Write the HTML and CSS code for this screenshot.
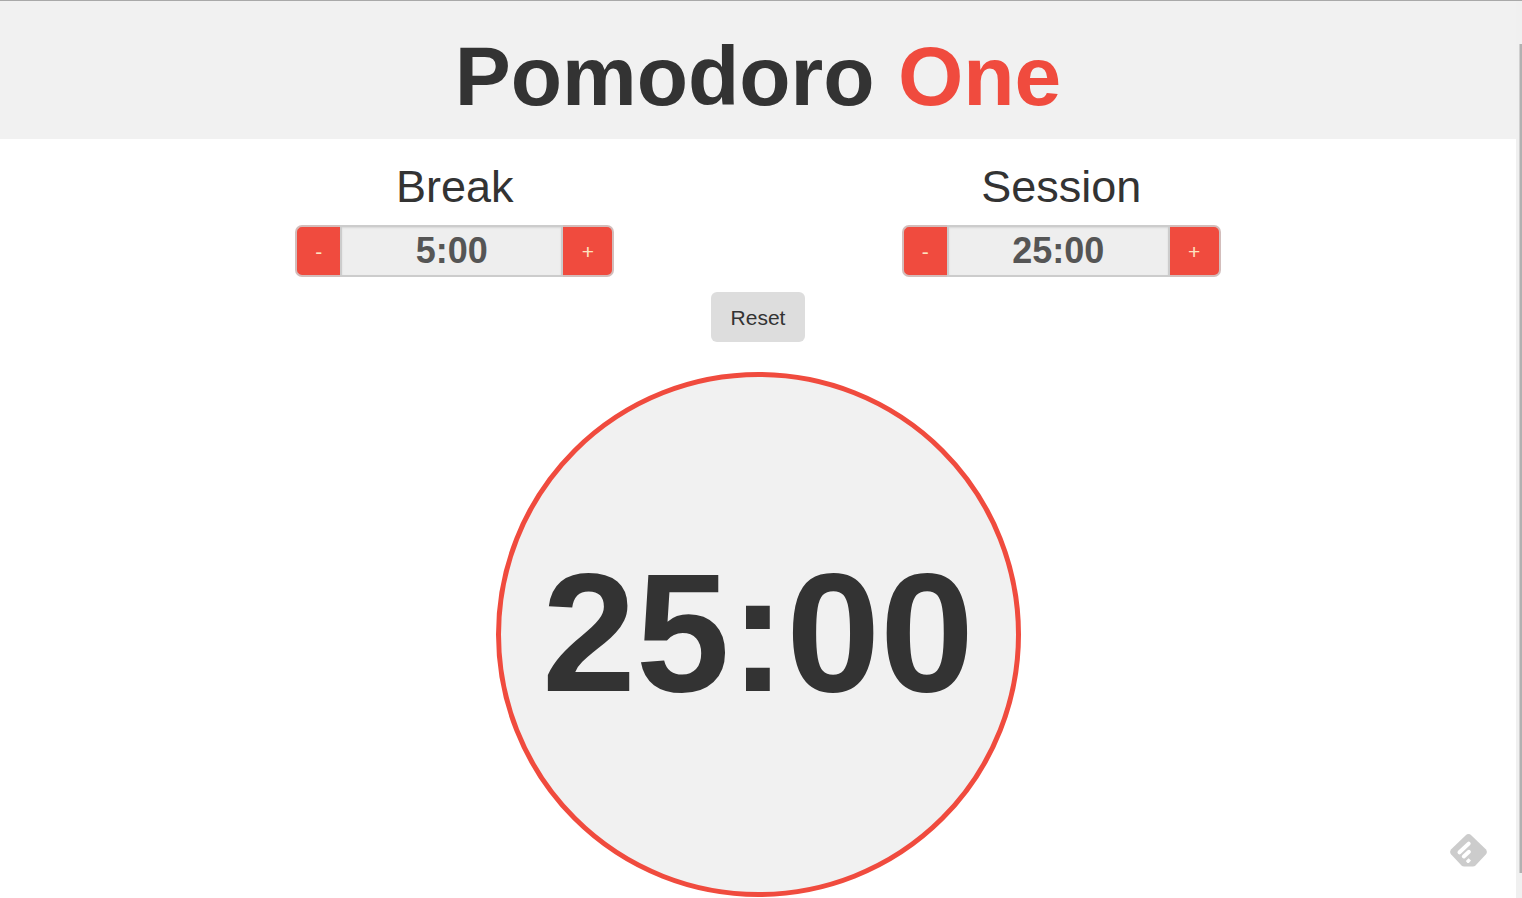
FILE: index.html
```html
<!DOCTYPE html>
<html lang="en">
<head>
<meta charset="utf-8">
<title>Pomodoro One</title>
<link rel="stylesheet" href="styles.css">
</head>
<body>
<div class="page">
  <header class="header">
    <h1 class="title">Pomodoro <span class="accent">One</span></h1>
  </header>
  <main class="content">
    <div class="settings">
      <div class="setting">
        <label class="setting-label" for="break">Break</label>
        <div class="stepper">
          <button class="step step-minus" type="button">-</button>
          <input class="value" id="break" type="text" value="5:00" readonly>
          <button class="step step-plus" type="button">+</button>
        </div>
      </div>
      <div class="setting">
        <label class="setting-label" for="session">Session</label>
        <div class="stepper">
          <button class="step step-minus" type="button">-</button>
          <input class="value" id="session" type="text" value="25:00" readonly>
          <button class="step step-plus" type="button">+</button>
        </div>
      </div>
    </div>
    <button class="reset" type="button">Reset</button>
    <div class="clock">25:00</div>
  </main>
</div>
<div class="scroll-track"><div class="scroll-thumb"></div></div>
<svg class="reader-icon" viewBox="0 0 37 33" aria-hidden="true">
  <path d="M15.5 1.4Q18.5-1.2 21.5 1.4L35.8 15.2Q38 18 35.8 20.6L25.7 31.2Q24.5 32.4 22.8 32.4H14.2Q12.5 32.4 11.3 31.2L1.2 20.6Q-1 18 1.2 15.2Z" fill="#ccc"/>
  <path d="M9.5 18.3L18.7 9.6M13.8 22.4L18.9 17.8" stroke="#fff" stroke-width="4" stroke-linecap="round"/>
  <path d="M18.6 24.2L21 26.5L18.8 29H17.4L15.8 27Z" fill="#fff"/>
</svg>
</body>
</html>
```
FILE: styles.css
```css
* {
  box-sizing: border-box;
}

body {
  display: flex;
  min-height: 100vh;
  margin: 0;
  border-top: 1px solid #a9a9a9;
  background: #fff;
  color: #333;
  font-family: "Liberation Sans", Arial, sans-serif;
}

.page {
  flex: 1;
}

.header {
  padding: 27px 0 15px;
  background: #f1f1f1;
  text-align: center;
}

.title {
  margin: 0;
  font-size: 84px;
  line-height: 96px;
}

.accent {
  color: #f04b3e;
}

.content {
  display: flex;
  flex-direction: column;
  align-items: center;
  padding-top: 23px;
}

.settings {
  display: grid;
  grid-template-columns: 1fr 1fr;
  width: 80%;
}

.setting {
  display: flex;
  flex-direction: column;
  align-items: center;
  gap: 13px;
}

.setting-label {
  font-size: 45px;
  line-height: 50px;
}

.stepper {
  display: flex;
  width: 319px;
  height: 52px;
}

.step {
  padding: 2px 0 0;
  border: 2px solid #d3bdbb;
  background: #f04b3e;
  color: #fde3c0;
  font: 21px "Liberation Sans", Arial, sans-serif;
}

.step-minus {
  width: 45px;
  border-right: 0;
  border-radius: 7px 0 0 7px;
}

.step-plus {
  width: 51px;
  border-left: 0;
  border-radius: 0 7px 7px 0;
}

.value {
  flex: 1;
  min-width: 0;
  padding: 0;
  border: 2px solid #ccc;
  border-radius: 0;
  outline: 0;
  background: #eee;
  box-shadow: inset 0 1px 2px rgba(0, 0, 0, 0.1);
  color: #555;
  font: bold 36px "Liberation Sans", Arial, sans-serif;
  text-align: center;
}

.reset {
  margin-top: 15px;
  padding: 14px 20px 12px;
  border: 0;
  border-radius: 6px;
  background: #ddd;
  color: #333;
  font: 21px/24px "Liberation Sans", Arial, sans-serif;
}

.clock {
  display: flex;
  align-items: center;
  justify-content: center;
  width: 525px;
  aspect-ratio: 1;
  margin-top: 30px;
  padding-bottom: 4px;
  border: 5px solid #f04b3e;
  border-radius: 50%;
  background: #f1f1f1;
  font-size: 169px;
  font-weight: bold;
}

.scroll-track {
  width: 6px;
  padding: 43px 0 25px 3px;
  background: #f0f0f0;
}

.scroll-thumb {
  height: 100%;
  border-left: 1px solid #d0d0d0;
  background: #b1b1b1;
}

.reader-icon {
  position: fixed;
  right: 35px;
  bottom: 31px;
  width: 37px;
  height: 33px;
  fill: none;
}
```
